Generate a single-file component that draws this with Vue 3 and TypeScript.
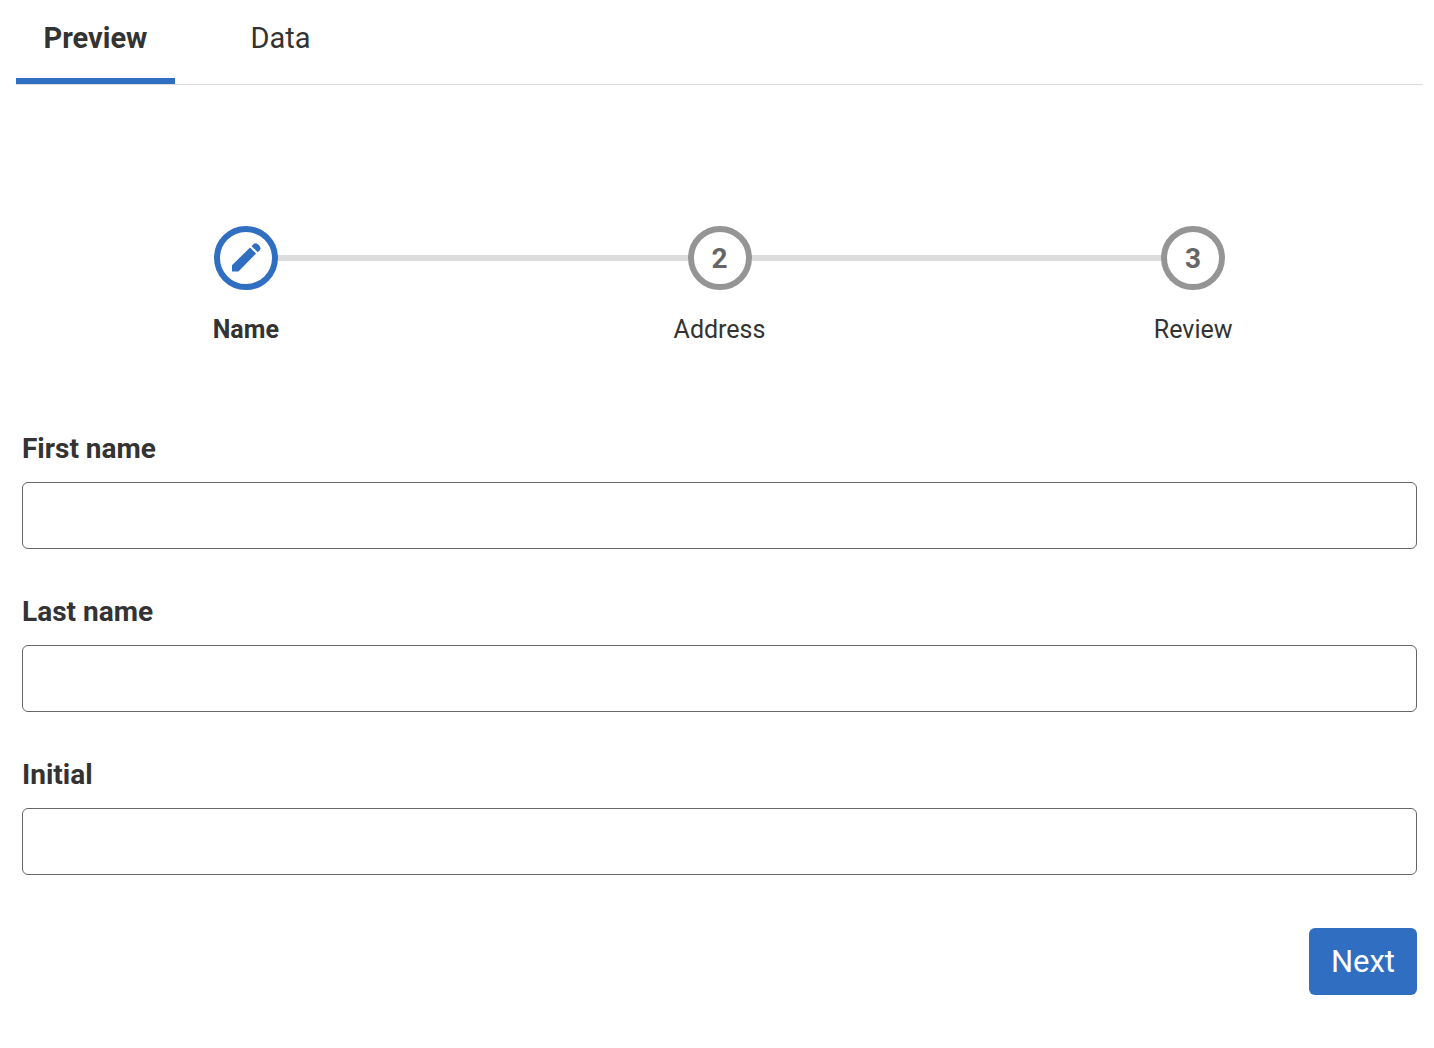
<script setup lang="ts">
import { ref, reactive } from 'vue'

type Field = 'first' | 'last' | 'initial'

const tabs = ['Preview', 'Data']
const activeTab = ref('Preview')
const steps = ['Name', 'Address', 'Review']
const current = ref(0)

const fields: { id: Field; label: string }[] = [
  { id: 'first', label: 'First name' },
  { id: 'last', label: 'Last name' },
  { id: 'initial', label: 'Initial' },
]
const values = reactive<Record<Field, string>>({ first: '', last: '', initial: '' })

function next() {
  current.value = Math.min(current.value + 1, steps.length - 1)
}
</script>

<template>
  <div class="page">
    <div class="tabs" role="tablist">
      <button
        v-for="tab in tabs"
        :key="tab"
        type="button"
        role="tab"
        class="tab"
        :class="{ active: tab === activeTab }"
        :aria-selected="tab === activeTab"
        @click="activeTab = tab"
      >
        {{ tab }}
      </button>
    </div>

    <form class="wizard" @submit.prevent="next">
      <ol class="steps">
        <li v-for="(step, i) in steps" :key="step" class="step" :class="{ current: i === current }">
          <div class="track">
            <span class="line" :class="{ hidden: i === 0 }"></span>
            <span class="circle">
              <svg v-if="i === current" class="pencil" viewBox="0 0 32 32" aria-hidden="true">
                <path d="M2 23.3V29.6H8.4L26 11.6L20 5.6Z" />
                <path d="M21.5 4.2L23.6 2.1Q25.6 0.6 27.8 2.2L29.6 4Q31.4 6.4 29.6 8.4L27.7 10.2Z" />
              </svg>
              <template v-else>{{ i + 1 }}</template>
            </span>
            <span class="line" :class="{ hidden: i === steps.length - 1 }"></span>
          </div>
          <span class="step-label">{{ step }}</span>
        </li>
      </ol>

      <div class="fields">
        <div v-for="field in fields" :key="field.id" class="field">
          <label :for="field.id">{{ field.label }}</label>
          <input :id="field.id" v-model="values[field.id]" type="text" />
        </div>
      </div>

      <div class="actions">
        <button type="submit" class="next">Next</button>
      </div>
    </form>
  </div>
</template>

<style>
body {
  background: #fff;
}
</style>

<style scoped>
.page {
  padding: 0 11px 32px 16px;
  color: #333;
  font-family: Roboto, "Liberation Sans", sans-serif;
}

.tabs {
  display: flex;
  gap: 26px;
  border-bottom: 1px solid #dcdcdc;
}

.tab {
  min-width: 159px;
  padding: 22px 24px 24px;
  border: 0;
  border-bottom: 6px solid transparent;
  background: none;
  color: inherit;
  font: 400 29px/32px Roboto, "Liberation Sans", sans-serif;
  cursor: pointer;
}

.tab.active {
  border-bottom-color: #2f6ec0;
  font-weight: 700;
}

.wizard {
  padding: 141px 6px 0;
}

.steps {
  display: grid;
  grid-template-columns: repeat(3, 1fr);
  margin: 0 -13px;
  padding: 0;
  list-style: none;
}

.step {
  text-align: center;
}

.track {
  display: flex;
  align-items: center;
}

.line {
  flex: 1;
  height: 6px;
  background: #dcdcdc;
}

.line.hidden {
  visibility: hidden;
}

.circle {
  display: flex;
  align-items: center;
  justify-content: center;
  box-sizing: border-box;
  width: 64px;
  height: 64px;
  border: 6px solid #959595;
  border-radius: 50%;
  color: #666;
  font-size: 28px;
  font-weight: 700;
}

.current .circle {
  border-color: #2f6ec0;
}

.pencil {
  width: 32px;
  height: 32px;
  fill: #2f6ec0;
}

.step-label {
  display: block;
  margin-top: 24px;
  font-size: 25px;
  line-height: 32px;
}

.current .step-label {
  font-weight: 700;
}

.fields {
  display: grid;
  gap: 47px;
  margin-top: 87px;
}

.field {
  display: grid;
  gap: 17px;
}

label {
  font-size: 28px;
  font-weight: 700;
  line-height: 32px;
}

input {
  box-sizing: border-box;
  width: 100%;
  height: 67px;
  padding: 0 20px;
  border: 1px solid #666;
  border-radius: 6px;
  background: #fff;
  color: inherit;
  font: 400 28px/32px Roboto, "Liberation Sans", sans-serif;
}

.actions {
  display: flex;
  justify-content: flex-end;
  margin-top: 53px;
}

.next {
  height: 67px;
  padding: 0 22px;
  border: 0;
  border-radius: 6px;
  background: #2f6ec0;
  color: #fff;
  font: 400 31px/40px Roboto, "Liberation Sans", sans-serif;
  cursor: pointer;
}
</style>
